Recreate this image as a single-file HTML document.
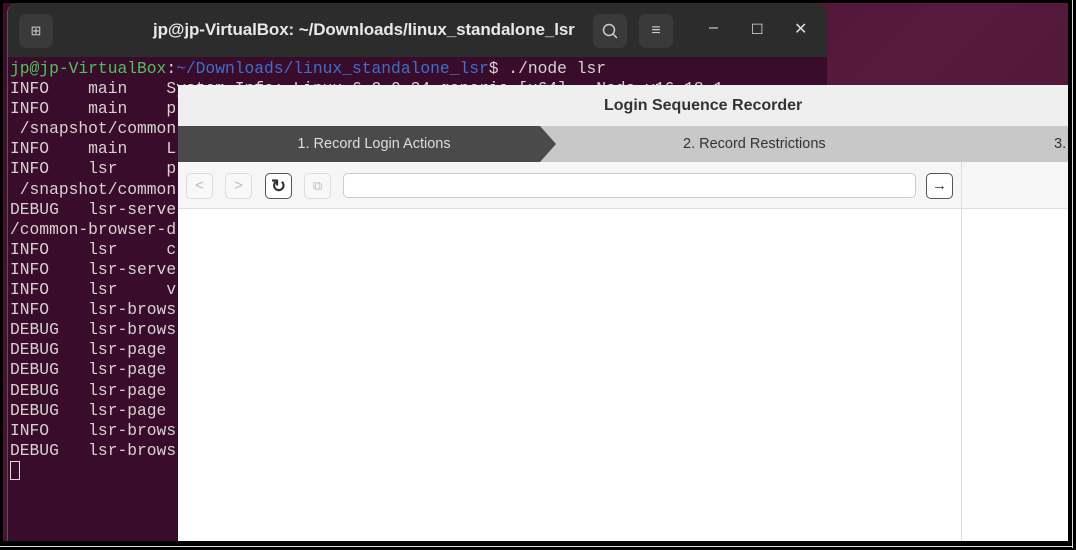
<!DOCTYPE html>
<html><head><meta charset="utf-8"><style>
*{margin:0;padding:0;box-sizing:border-box}
body{width:1076px;height:550px;overflow:hidden;background:#000;position:relative;font-family:"Liberation Sans",sans-serif}
.desk{position:absolute;left:3px;top:3px;width:1065px;height:538px;background:linear-gradient(135deg,#3d0d2c,#561a3c 60%,#4a1434)}
.wl{position:absolute;left:1072px;top:0;width:1px;height:548px;background:#ddd}
.wb{position:absolute;left:0;top:546px;width:1073px;height:1px;background:#ddd}
.term{position:absolute;left:7px;top:3px;width:820px;height:538px;background:#380c2a;border-radius:10px 10px 0 0;overflow:hidden;border-left:1px solid #555}
.tb{position:absolute;left:0;top:0;width:100%;height:54px;background:#2c2c2c}
.tbtn{position:absolute;top:11px;width:34px;height:34px;border-radius:7px;background:#3a3a3a;color:#ccc;text-align:center;line-height:34px;font-size:16px}
.ttl{position:absolute;left:145px;top:17px;color:#e8e8e8;font-size:17px;font-weight:bold;letter-spacing:-.1px}
.wc{position:absolute;top:16px;color:#ddd;font-size:16px}
.lines{position:absolute;left:2px;top:56px;font-family:"Liberation Mono","DejaVu Sans Mono",monospace;font-size:16.3px;line-height:20.1px;color:#d8d2d0;white-space:pre}
.g{color:#4ec25a}.b{color:#3f6fc9}
.dlg{position:absolute;left:178px;top:85px;width:890px;height:456px;background:#fff}
.dt{height:41px;background:#efefef;line-height:42px;font-size:16px;font-weight:bold;color:#333;padding-left:426px}
.tabs{position:absolute;top:41px;left:0;width:890px;height:36px;background:#c8c8c8;font-size:14.5px;color:#333}
.t1{position:absolute;left:0;top:0;width:362px;height:36px;background:#4a4a4a;color:#ddd;line-height:37px;text-align:center;padding-left:30px}
.ar{position:absolute;left:362px;top:0;width:0;height:0;border-top:18px solid transparent;border-bottom:18px solid transparent;border-left:16px solid #4a4a4a}
.toolbar{position:absolute;top:77px;left:0;width:890px;height:47px;background:#f6f6f6;border-bottom:1px solid #ddd}
.btn{position:absolute;top:11px;width:27px;height:26px;border:1px solid #ddd;border-radius:5px;background:#f8f8f8;color:#bbb;text-align:center;line-height:24px;font-size:15px}
.url{position:absolute;left:165px;top:11px;width:573px;height:25px;border:1px solid #ccc;border-radius:5px;background:#fff}
.div{position:absolute;left:783px;top:77px;width:1px;height:379px;background:#ddd}
</style></head><body>
<div class="desk"></div>
<div class="term">
<div class="tb">
<div class="tbtn" style="left:11px;font-size:13px">⊞</div>
<div class="ttl">jp@jp-VirtualBox: ~/Downloads/linux_standalone_lsr</div>
<div class="tbtn" style="left:585px">
<svg width="16" height="16" viewBox="0 0 16 16" style="margin-top:9px"><circle cx="7" cy="7" r="5.5" fill="none" stroke="#ccc" stroke-width="1.5"/><path d="M11 11l4 4" stroke="#ccc" stroke-width="1.5"/></svg></div>
<div class="tbtn" style="left:631px">≡</div>
<div class="wc" style="left:701px">–</div>
<div class="wc" style="left:743px;font-size:14px;top:18px">☐</div>
<div class="wc" style="left:786px">✕</div>
</div>
<div class="lines"><span class="g">jp@jp-VirtualBox</span>:<span class="b">~/Downloads/linux_standalone_lsr</span>$ ./node lsr
INFO    main    System Info: Linux 6.2.0-34-generic [x64] - Node v16.18.1
INFO    main    p
 /snapshot/common
INFO    main    L
INFO    lsr     p
 /snapshot/common
DEBUG   lsr-serve
/common-browser-d
INFO    lsr     c
INFO    lsr-serve
INFO    lsr     v
INFO    lsr-brows
DEBUG   lsr-brows
DEBUG   lsr-page
DEBUG   lsr-page
DEBUG   lsr-page
DEBUG   lsr-page
INFO    lsr-brows
DEBUG   lsr-brows
<span style="display:inline-block;width:10px;height:19px;border:1px solid #ddd;vertical-align:-4px"></span></div>
</div>
<div class="dlg">
<div class="dt">Login Sequence Recorder</div>
<div class="tabs">
<div class="t1">1. Record Login Actions</div><div class="ar"></div>
<div style="position:absolute;left:505px;top:0;line-height:37px">2. Record Restrictions</div>
<div style="position:absolute;left:876px;top:0;line-height:37px">3.</div>
</div>
<div class="toolbar">
<div class="btn" style="left:8px">&lt;</div>
<div class="btn" style="left:47px">&gt;</div>
<div class="btn" style="left:87px;border-color:#555;background:#fff;color:#333;font-size:18px;font-weight:bold">↻</div>
<div class="btn" style="left:126px;font-size:13px">⧉</div>
<div class="url"></div>
<div class="btn" style="left:748px;border-color:#555;background:#fff;color:#333">→</div>
</div>
<div class="div"></div>
</div>
<div class="wl"></div><div class="wb"></div>
</body></html>
